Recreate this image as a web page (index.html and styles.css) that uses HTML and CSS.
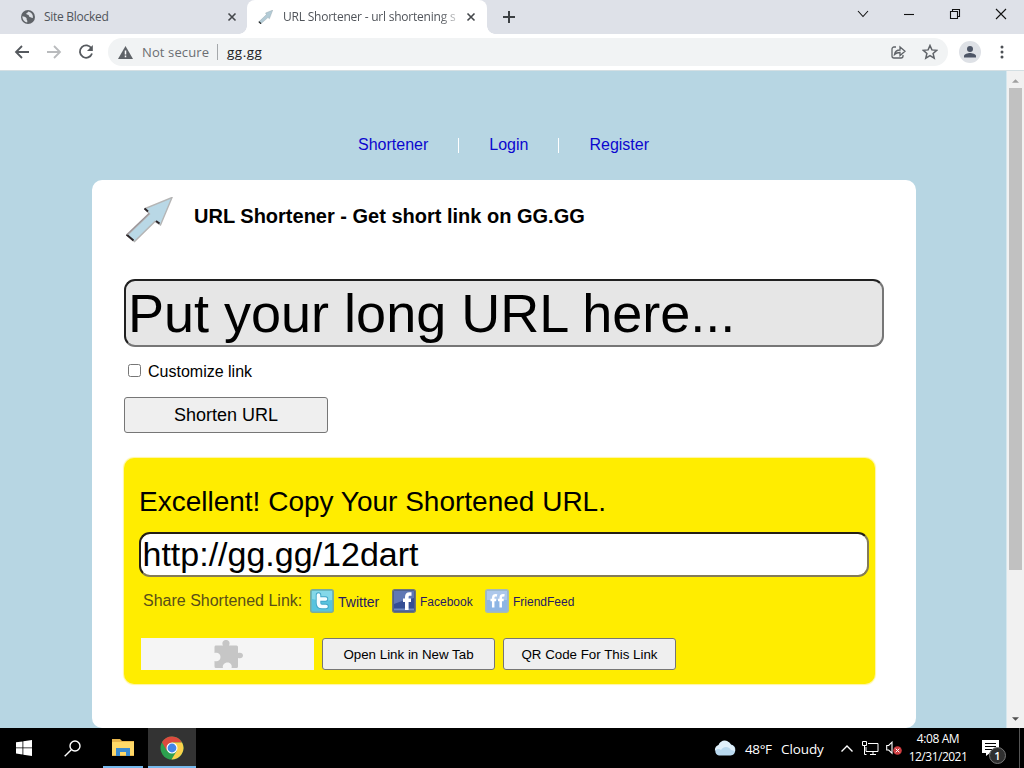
FILE: index.html
```html
<!DOCTYPE html>
<html lang="en">
<head>
<meta charset="utf-8">
<title>URL Shortener</title>
<link rel="stylesheet" href="styles.css">
</head>
<body>
<div class="screen">
  <header class="tabstrip">
    <div class="tab">
      <svg class="globe" viewBox="0 0 14 14"><circle cx="7" cy="7" r="7" fill="#5f6368"/><path d="M1.4 6.2c1.6.2 3 .6 4 1.8.6.8-.1 1.4.5 2.1.5.6.6 1.400.2 2.400A5.700 5.700 0 0 1 1.400 6.200zM7.300 1.500c-.2 1.300-2 1-2 2.300 0 1 1.500.6 2.200 1.300.7.7.2 1.700 1.300 1.900 1.200.2 1.500 1 3 .9.500-2.700-1-5.600-4.500-6.400z" fill="#dee1e6"/></svg>
      <span class="tab-title blocked">Site Blocked</span>
      <svg class="x" viewBox="0 0 8 8"><path d="M.5.5l7 7M7.500.5l-7 7"/></svg>
    </div>
    <div class="tab active">
      <svg class="favicon" viewBox="0 0 48 46"><path d="M2 39L27 15l-3-5L48 0 37 29l-5-4L9 45z" fill="#b3cbd6" stroke="#87959c"/><path d="M2 38l7 7" stroke="#222" stroke-width="4"/></svg>
      <span class="tab-title current">URL Shortener - url shortening se</span>
      <svg class="x" viewBox="0 0 8 8"><path d="M.5.5l7 7M7.500.5l-7 7"/></svg>
    </div>
    <svg class="plus" viewBox="0 0 12 12"><path d="M6 0v12M0 6h12"/></svg>
    <div class="window-controls">
      <svg viewBox="0 0 12 12"><path d="M1 3l5 5.500L11 3"/></svg>
      <svg viewBox="0 0 12 12"><path d="M1 6.500h10"/></svg>
      <svg viewBox="0 0 12 12"><path d="M1.500 3.500h7v7h-7zM3.500 3.500v-2h7v7h-2"/></svg>
      <svg viewBox="0 0 12 12"><path d="M1 1l10 10M11 1L1 11"/></svg>
    </div>
  </header>
  <div class="toolbar">
    <svg class="nav-icon" viewBox="0 0 16 16"><path d="M15 8H2M8 2L2 8l6 6"/></svg>
    <svg class="nav-icon off" viewBox="0 0 16 16"><path d="M1 8h13M8 2l6 6-6 6"/></svg>
    <svg class="nav-icon" viewBox="0 0 16 16"><path d="M13.500 4.500A6.200 6.200 0 1 0 14 9.500"/><path d="M14.800 1v6H9z" fill="#55595e" stroke="none"/></svg>
    <div class="omnibox">
      <svg class="warn" viewBox="0 0 15 13"><path d="M7.500 0L15 13H0z" fill="#5f6368"/><path d="M7.500 4.500v4M7.500 9.500v1.700" stroke="#fff" stroke-width="1.500"/></svg>
      <span class="secure">Not secure</span>
      <span class="divider"></span>
      <span class="address">gg.gg</span>
      <svg class="share" viewBox="0 0 16 16"><path d="M6 3H4a2 2 0 0 0-2 2v7a2 2 0 0 0 2 2h7a2 2 0 0 0 2-2v-1M4.500 10.500C5 7.500 7 6 10 6V3l5 4.300-5 4.200v-3c-2.500 0-4 .5-5.500 2z"/></svg>
      <svg class="star" viewBox="0 0 16 16"><path d="M8 1.500l1.900 4.400 4.800.4-3.600 3.200 1.100 4.700L8 11.700l-4.200 2.500 1.100-4.700L1.300 6.300l4.800-.4z"/></svg>
    </div>
    <svg class="profile" viewBox="0 0 22 22"><circle cx="11" cy="11" r="11" fill="#dee1e6"/><circle cx="11" cy="8" r="3" fill="#4d5566"/><path d="M5 16.500v-1.500c0-2 4-3 6-3s6 1 6 3v1.500z" fill="#4d5566"/></svg>
    <svg class="dots" viewBox="0 0 4 14"><circle cx="2" cy="2" r="1.500"/><circle cx="2" cy="7" r="1.500"/><circle cx="2" cy="12" r="1.500"/></svg>
  </div>

  <div class="viewport">
    <main class="page">
      <nav class="links"><a>Shortener</a><i></i><a>Login</a><i></i><a>Register</a></nav>
      <section class="card">
        <div class="brand">
          <svg class="logo" viewBox="0 0 48 46"><path d="M2 38.500L24.500 17 20 11.500 47 .500 35.500 28 30 24.500 9.500 44.500z" fill="#b9d8e6" stroke="#b5b5b5" stroke-width="1.400"/><path d="M1.500 37.500l7 6M19.500 11.500l3.500 3M31 24l3.500 2.500" stroke="#2c2528" stroke-width="2"/><path d="M2 37.500L24 16.500" stroke="#9a9498" stroke-width="1.200"/></svg>
          <h1>URL Shortener - Get short link on GG.GG</h1>
        </div>
        <div class="long-url">Put your long URL here...</div>
        <div class="customize"><span class="checkbox"></span><span>Customize link</span></div>
        <div class="button shorten">Shorten URL</div>
        <div class="result">
          <h2>Excellent! Copy Your Shortened URL.</h2>
          <div class="short-url">http://gg.gg/12dart</div>
          <div class="share-row">
            <span class="share-label">Share Shortened Link:</span>
            <svg class="social" viewBox="0 0 24 24"><rect x=".75" y=".75" width="22.500" height="22.500" rx="2" fill="#58c3de" stroke="#7dab9a" stroke-width="1.500"/><path d="M2 2h20v9Q12 13 2 10z" fill="#84d8e9"/><path d="M8.500 6v8q0 3.500 3.500 3.500h4M8.500 10h7" stroke="#3fa6c8" stroke-width="5.500" stroke-linecap="round" fill="none"/><path d="M8.500 6v8q0 3.500 3.500 3.500h4M8.500 10h7" stroke="#f4fdff" stroke-width="3.600" stroke-linecap="round" fill="none"/></svg>
            <a class="twitter">Twitter</a>
            <svg class="social" viewBox="0 0 24 24"><rect x=".75" y=".75" width="22.500" height="22.500" rx="2" fill="#354f94" stroke="#6f7779" stroke-width="1.500"/><path d="M2 2h20v7Q12 11 2 15z" fill="#6078b4"/><path d="M2 20.500h20" stroke="#6f8ac0" stroke-width="2"/><path d="M19.500 5H17.500q-2.700 0-2.700 3v13M11 11.300h8" stroke="#fff" stroke-width="3.600" fill="none"/></svg>
            <a class="facebook">Facebook</a>
            <svg class="social" viewBox="0 0 24 24"><rect x=".75" y=".75" width="22.500" height="22.500" rx="2" fill="#8db5e4" stroke="#a7bbb5" stroke-width="1.500"/><path d="M2 2h20v9H2z" fill="#adc8eb"/><path d="M12 6.500Q8.200 5.500 8.200 9v9.500M5.500 11h5.700M19.500 6.500Q15.700 5.500 15.700 9v9.500M13 11h5.700" stroke="#fff" stroke-width="2.500" fill="none"/></svg>
            <a class="friendfeed">FriendFeed</a>
          </div>
          <div class="actions">
            <div class="plugin"><svg viewBox="0 0 29 28"><path d="M1.500 5.500H9C7.500 2.500 9 0 12 0s4.500 2.500 3 5.500h7.500q1.500 0 1.500 1.500v6c3-1 5 .5 5 2.500s-2 3.500-5 2.500V26.500q0 1.500-1.500 1.500H17.500c1-3-1-5.500-4-5.500s-5.500 2.500-4.500 5.500H2q-1.500 0-1.500-1.500V21C4 22 6.500 20 6.500 17S4 12 .5 13V7q0-1.500 1-1.500z" fill="#c6c6c6"/></svg></div>
            <div class="button">Open Link in New Tab</div>
            <div class="button">QR Code For This Link</div>
          </div>
        </div>
      </section>
    </main>
    <div class="scrollbar">
      <svg viewBox="0 0 8 4"><path d="M0 4l4-4 4 4z" fill="#a0a0a0"/></svg>
      <div class="thumb"></div>
      <svg class="down" viewBox="0 0 8 4"><path d="M0 0l4 4 4-4z" fill="#505050"/></svg>
    </div>
  </div>

  <footer class="taskbar">
    <div class="task"><svg class="windows" viewBox="0 0 16 16"><path d="M0 2.300l6.500-.9v6.100H0zM7.300 1.300L16 0v7.500H7.300zM0 8.300h6.500v6.100L0 13.600zM7.300 8.300H16V16l-8.700-1.300z" fill="#fff"/></svg></div>
    <div class="task"><svg class="search" viewBox="0 0 17 17"><circle cx="11" cy="6" r="5"/><path d="M7.300 9.700L.7 16.300"/></svg></div>
    <div class="task explorer"><svg viewBox="0 0 22 18"><path d="M0 1h8l2 2h12v15H0z" fill="#e8b64c"/><path d="M0 4h22v13H0z" fill="#ffd968"/><path d="M4 10h14v8h-4v-4H8v4H4z" fill="#3b8bd0"/></svg></div>
    <div class="task chrome"><svg viewBox="0 0 24 24"><circle cx="12" cy="12" r="11.500" fill="#2da04f"/><path d="M2 6.200A11.500 11.500 0 0 1 22 6.500H12L7 15z" fill="#dc4a3e"/><path d="M12 6.500h10A11.500 11.500 0 0 1 11.500 23.500L17 14.500z" fill="#fbd04b"/><circle cx="12" cy="12" r="5.500" fill="#fff"/><circle cx="12" cy="12" r="4.400" fill="#4285e8"/></svg></div>
    <svg class="cloud" viewBox="0 0 22 16"><path d="M5 15.500a5 5 0 0 1-.5-9.500A7 7 0 0 1 17 4.500a5.600 5.600 0 0 1-.5 11z" fill="#b9d9ef"/><path d="M1 11c2-3 5-2 6-1 2-4 8-4 10 0l4 1c0-4-2-5.500-4-6C14-1 7-1 4.500 5 2 6 .5 8 1 11z" fill="#e0f0fb"/></svg>
    <span class="temp">48°F</span><span class="sky">Cloudy</span>
    <svg class="caret" viewBox="0 0 12 7"><path d="M.5 6.500L6 1l5.500 5.500"/></svg>
    <svg class="network" viewBox="0 0 17 14"><path d="M6 2.500h10v8H4V6M8 13.500h6M11 10.500v3M.5.5h4v4h-4zM2.500 4.500v9h2"/></svg>
    <svg class="volume" viewBox="0 0 16 14"><path d="M.7 4.500h2L6 1.200v11L2.700 9h-2z" fill="none" stroke="#fff" stroke-width="1.100"/><circle cx="11.500" cy="9.500" r="4.300" fill="#cf3c40"/><path d="M9.700 7.700l3.600 3.600M13.300 7.700l-3.600 3.600" stroke="#fff"/></svg>
    <div class="clock"><span>4:08 AM</span><span class="date">12/31/2021</span></div>
    <div class="notice">
      <svg viewBox="0 0 17 16"><path d="M0 0h17v13H8l-4 3v-3H0z" fill="#fff"/><path d="M3 3.500h11M3 6.500h11M3 9.500h7" stroke="#000"/></svg>
      <span class="badge">1</span>
    </div>
    <div class="show-desktop"></div>
  </footer>
</div>
</body>
</html>
```
FILE: styles.css
```css
* { box-sizing: border-box; }
body { margin: 0; font-family: "Liberation Sans", Arial, sans-serif; }
svg { display: block; flex: none; }
span, a { white-space: nowrap; }
.screen { width: 1024px; height: 768px; display: flex; flex-direction: column; overflow: hidden; background: #fff; }

.tabstrip { height: 34px; flex: none; display: flex; background: #dee1e8; font-family: "Open Sans", sans-serif; color: #50545a; }
.tab { width: 247px; height: 34px; display: flex; align-items: center; padding-left: 21px; border-radius: 0 0 8px 0; }
.tab.active { width: 240px; padding-left: 11px; background: #fff; border-radius: 8px 8px 0 0; position: relative; }
.tab.active::after { content: ""; position: absolute; left: 240px; bottom: 0; width: 8px; height: 8px; background: radial-gradient(circle at 8px 0, transparent 7.5px, #fff 8px); }
.tab.active::before { content: ""; position: absolute; left: -8px; bottom: 0; width: 8px; height: 8px; background: radial-gradient(circle at 0 0, transparent 7.5px, #fff 8px); }
.globe { width: 14px; height: 14px; margin-right: 9px; }
.favicon { width: 15px; height: 14px; margin-right: 10px; }
.tab-title { font-size: 12px; line-height: 18px; }
.blocked { width: 184px; letter-spacing: -.28px; }
.current { width: 173px; margin-right: 11px; letter-spacing: -.22px; -webkit-mask-image: linear-gradient(90deg, #000 157px, transparent 180px); mask-image: linear-gradient(90deg, #000 157px, transparent 180px); }
.x { width: 8px; height: 8px; stroke: #44474b; stroke-width: 1.6; overflow: visible; }
.plus { width: 12px; height: 12px; margin: 11px 0 0 16px; stroke: #3c4043; stroke-width: 2; }
.window-controls { display: flex; gap: 34px; margin: 8px 17px 0 auto; }
.window-controls svg { width: 12px; height: 12px; fill: none; stroke: #111; stroke-width: 1.1; }

.toolbar { height: 37px; flex: none; display: flex; align-items: center; padding-left: 14px; border-bottom: 1px solid #d4dfe3; font-family: "Open Sans", sans-serif; }
.nav-icon { width: 16px; height: 16px; margin-right: 16px; fill: none; stroke: #55595e; stroke-width: 1.8; }
.nav-icon.off { stroke: #b9bbbd; }
.omnibox { width: 840px; height: 28px; margin-left: -2px; padding-left: 10px; border-radius: 14px; background: #f1f3f4; display: flex; align-items: center; font-size: 13px; }
.warn { width: 15px; height: 13px; margin-right: 9px; }
.secure { width: 75px; color: #6b6e72; letter-spacing: .12px; }
.divider { width: 1px; height: 16px; background: #a5a8ab; }
.address { margin-left: 9px; color: #202124; font-size: 13.5px; letter-spacing: .5px; }
.share, .star { width: 16px; height: 16px; fill: none; stroke: #5f6368; stroke-width: 1.3; }
.share { margin-left: auto; margin-right: 16px; }
.star { margin-right: 10px; stroke-width: 1.5; }
.profile { width: 22px; height: 22px; margin-left: 11px; }
.dots { width: 4px; height: 14px; margin-left: 19px; fill: #4c5055; }

.viewport { height: 657px; flex: none; display: flex; }
.page { width: 1007px; height: 657px; padding: 61px 91px 0 92px; background: #b7d6e3; border-right: 1px solid #d5e7ee; overflow: hidden; }
.links { height: 26px; display: flex; align-items: center; justify-content: center; font-size: 16px; gap: 30px; color: #0c07cf; }
.links i { width: 1px; height: 15px; margin-top: 1px; background: #fff; }
.card { width: 824px; height: 548px; margin-top: 22px; padding: 0 32px; background: #fff; border-radius: 10px; }
.brand { height: 99px; display: flex; padding-top: 17px; }
.logo { width: 48px; height: 46px; margin-left: 1px; }
h1 { margin: 7px 0 0 21px; font-size: 20px; line-height: 24px; white-space: nowrap; }
.long-url { height: 68px; border: 2px solid; border-color: #202020 #767676 #767676 #202020; border-radius: 11px; background: #e6e6e6; padding-left: 2px; font-size: 54px; line-height: 64px; }
.customize { height: 50px; display: flex; align-items: center; gap: 7px; padding-left: 4px; font-size: 16px; }
.checkbox { width: 13px; height: 13px; border: 1px solid #767676; border-radius: 2.5px; margin-top: -3px; }
.button { border: 1px solid #767676; border-radius: 3px; background: #efefef; text-align: center; white-space: nowrap; }
.shorten { width: 204px; height: 36px; font-size: 18px; line-height: 34px; }
.result { width: 751px; height: 226px; margin-top: 25px; padding: 28px 0 0 15px; background: #ffed00; border-radius: 10px; box-shadow: 0 0 1px 1px #fff6a0; }
h2 { margin: 0; height: 46px; font-size: 28px; font-weight: 400; line-height: 32px; }
.short-url { width: 730px; height: 45px; padding-left: 1.5px; border: 2px solid; border-color: #241f13 #837b58 #837b58 #241f13; border-radius: 11px; background: #fff; font-size: 34px; line-height: 40px; }
.share-row { height: 48px; display: flex; align-items: center; padding-left: 4px; font-size: 12px; color: #271a62; }
.share-label { width: 167px; font-size: 16px; color: #594f18; }
.social { width: 24px; height: 24px; margin-right: 4px; }
.twitter { width: 54px; font-size: 14px; }
.facebook { width: 65px; }
.share-row a { margin-top: 1px; }
.actions { display: flex; gap: 8px; margin: 13px 0 0 2px; }
.plugin { width: 173px; height: 32px; background: #f5f5f5; display: flex; justify-content: center; align-items: center; }
.plugin svg { width: 29px; height: 28px; margin-left: 2px; }
.actions .button { width: 173px; height: 32px; font-size: 13.333px; line-height: 31px; }
.scrollbar { width: 17px; height: 657px; background: #f1f1f1; display: flex; flex-direction: column; align-items: center; padding-top: 8px; }
.scrollbar svg { width: 7px; height: 4px; }
.thumb { width: 13px; height: 482px; margin-top: 5px; background: #c1c1c1; }
.scrollbar .down { margin-top: auto; margin-bottom: 7px; }

.taskbar { height: 40px; flex: none; display: flex; align-items: center; background: #000; color: #fff; font-family: "Open Sans", sans-serif; }
.task { width: 48px; height: 40px; display: flex; align-items: center; justify-content: center; }
.windows { width: 16px; height: 16px; }
.search { width: 17px; height: 17px; fill: none; stroke: #fff; stroke-width: 1.4; }
.explorer { width: 40px; margin: 0 5px 0 7px; border-bottom: 2px solid #76b9ed; }
.explorer svg { width: 22px; height: 18px; }
.chrome { border-bottom: 2px solid #76b9ed; background: #333; }
.chrome svg { width: 24px; height: 24px; margin-top: 2px; }
.cloud { width: 22px; height: 16px; margin-left: 518px; }
.temp, .sky { font-size: 13.5px; padding-top: 2px; }
.temp { width: 36px; margin-left: 9px; letter-spacing: -.4px; }
.sky { width: 60px; letter-spacing: -.1px; }
.caret { width: 12px; height: 7px; fill: none; stroke: #fff; stroke-width: 1.4; }
.network { width: 17px; height: 14px; margin-left: 9px; fill: none; stroke: #fff; }
.volume { width: 16px; height: 14px; margin-left: 7px; }
.clock { width: 62px; margin-left: 5px; display: flex; flex-direction: column; align-items: center; font-size: 12px; line-height: 18px; letter-spacing: -.4px; }
.date { letter-spacing: -.5px; }
.notice { position: relative; width: 17px; height: 16px; margin-left: 13px; }
.notice svg { width: 17px; height: 16px; }
.badge { position: absolute; left: 7px; top: 7px; width: 17px; height: 17px; border: 1px solid #777; border-radius: 50%; background: #303030; font-size: 11px; line-height: 15px; text-align: center; font-weight: 600; }
.show-desktop { width: 1px; height: 40px; margin: 0 4px 0 auto; background: #555; }
```
